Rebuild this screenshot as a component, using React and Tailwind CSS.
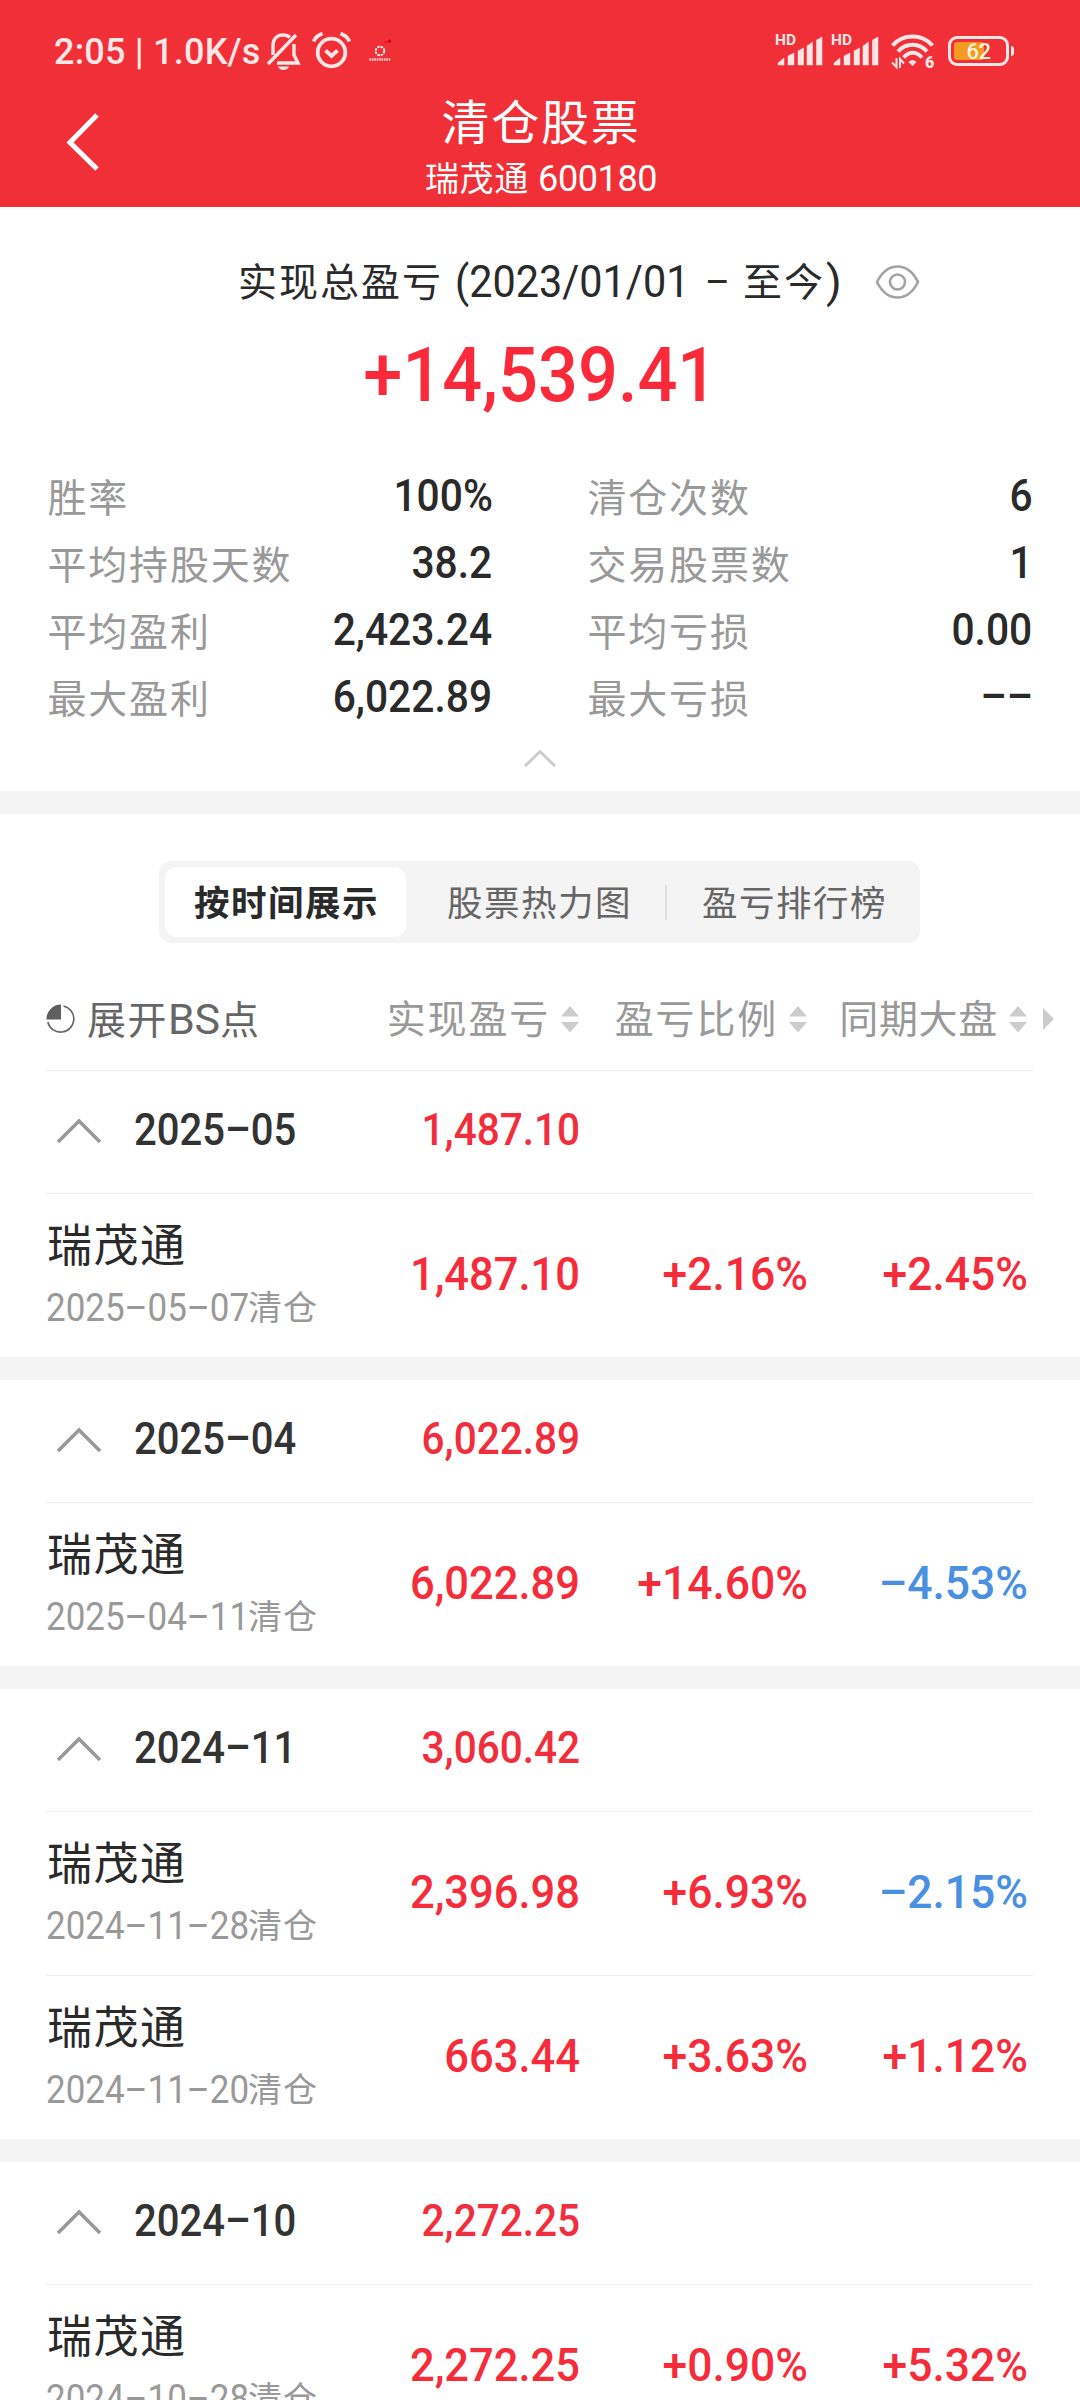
import React, { useState } from 'react';

const stats = [
  [
    { label: '胜率', value: '100%' },
    { label: '平均持股天数', value: '38.2' },
    { label: '平均盈利', value: '2,423.24' },
    { label: '最大盈利', value: '6,022.89' },
  ],
  [
    { label: '清仓次数', value: '6' },
    { label: '交易股票数', value: '1' },
    { label: '平均亏损', value: '0.00' },
    { label: '最大亏损', value: '––' },
  ],
];

const tabs = ['按时间展示', '股票热力图', '盈亏排行榜'];

const months = [
  {
    month: '2025–05',
    total: '1,487.10',
    trades: [{ name: '瑞茂通', date: '2025–05–07', profit: '1,487.10', ratio: '+2.16%', market: '+2.45%' }],
  },
  {
    month: '2025–04',
    total: '6,022.89',
    trades: [{ name: '瑞茂通', date: '2025–04–11', profit: '6,022.89', ratio: '+14.60%', market: '–4.53%' }],
  },
  {
    month: '2024–11',
    total: '3,060.42',
    trades: [
      { name: '瑞茂通', date: '2024–11–28', profit: '2,396.98', ratio: '+6.93%', market: '–2.15%' },
      { name: '瑞茂通', date: '2024–11–20', profit: '663.44', ratio: '+3.63%', market: '+1.12%' },
    ],
  },
  {
    month: '2024–10',
    total: '2,272.25',
    trades: [{ name: '瑞茂通', date: '2024–10–28', profit: '2,272.25', ratio: '+0.90%', market: '+5.32%' }],
  },
];

export default function App() {
  const [activeTab, setActiveTab] = useState(0);

  return (
    <div className="w-[1080px] h-[2400px] overflow-hidden bg-white text-[#2a2a2a] font-['Roboto','Noto_Sans_CJK_SC',sans-serif]">
      {/* Header */}
      <header className="h-[207px] bg-[#f12f37] text-white">
        <StatusBar />
        <div className="h-[105px] grid grid-cols-[200px_1fr_200px]">
          <button className="pl-[66px] pt-[9px] flex items-start">
            <svg width="34" height="60" viewBox="0 0 34 60" fill="none" stroke="#fff" strokeWidth="5">
              <path d="M31 4 L4 31.5 L31 58" />
            </svg>
          </button>
          <div className="flex flex-col items-center">
            <h1 className="h-[42px] leading-[42px] text-[48px] font-normal tracking-[1.8px] mt-[1px] mr-[-2px]">清仓股票</h1>
            <div className="h-[42px] leading-[42px] mt-[13px] text-[34px] tracking-[0.700px] mr-[-2px] whitespace-nowrap">
              瑞茂通 <span className="text-[36px] tracking-[-0.400px]">600180</span>
            </div>
          </div>
        </div>
      </header>

      {/* Summary */}
      <section className="h-[584px]">
        <div className="pt-[49px] pl-[238px] flex items-center h-[101px]">
          <span className="flex items-center h-[52px] text-[39px] leading-[52px] whitespace-nowrap">
            <span className="tracking-[2px] pt-[2px]">实现总盈亏</span>
            <span className="w-[230px] ml-[12px] text-[45px]">
              <span className="inline-block origin-left scale-x-[0.92]">(2023/01/01</span>
            </span>
            <span className="text-[38px] w-[22px] ml-[20px]">–</span>
            <span className="tracking-[2px] pt-[2px] ml-[16px]">至今</span>
            <span className="text-[45px] ml-[1px]">)</span>
          </span>
          <svg className="ml-auto mr-[160px]" width="45" height="34" viewBox="0 0 45 34" fill="none" stroke="#a3a3a3" strokeWidth="2.6">
            <path d="M2 17 C8 5 15 1.5 22.500 1.500 C30 1.500 37 5 43 17 C37 29 30 32.500 22.500 32.500 C15 32.500 8 29 2 17 Z" />
            <circle cx="22.500" cy="17" r="7.500" />
          </svg>
        </div>
        <div className="h-[132px] leading-[134px] text-center text-[76px] font-medium text-[#fb2a3a]">
          <span className="inline-block scale-x-[0.925]">+14,539.41</span>
        </div>
        <div className="grid grid-cols-[443px_443px] gap-x-[97px] pl-[48px] pt-[21px]">
          {stats.map((col, i) => (
            <div key={i}>
              {col.map((item) => (
                <div key={item.label} className="h-[67px] flex justify-between items-center">
                  <span className="text-[39px] tracking-[1.800px] text-[#999] pt-[9px] ml-[-0.500px]">{item.label}</span>
                  <span className="text-[45px] font-medium inline-block origin-right scale-x-[0.905] pt-[2px] mr-[-1.500px]">{item.value}</span>
                </div>
              ))}
            </div>
          ))}
        </div>
        <div className="flex justify-center pt-[20px]">
          <svg width="34" height="19" viewBox="0 0 34 19" fill="none" stroke="#ccc" strokeWidth="3">
            <path d="M2 17 L17 2.500 L32 17" />
          </svg>
        </div>
      </section>

      <div className="h-[23px] bg-[#f4f4f4]" />

      {/* Tabs */}
      <div className="pt-[47px] pl-[159px] flex">
        <div className="w-[761px] h-[82px] rounded-xl bg-[#f4f4f4] p-[6px] flex items-center">
          {tabs.map((tab, i) => (
            <React.Fragment key={tab}>
              {i === 2 && <span className="w-[2px] h-[35px] bg-[#dfdfdf]" />}
              <button
                onClick={() => setActiveTab(i)}
                className={`h-[70px] pt-[5px] text-[35.500px] tracking-[1.500px] rounded-xl whitespace-nowrap ${
                  i === 0 ? 'w-[241px] pl-[2px]' : i === 1 ? 'w-[259px] pl-[8px]' : 'flex-1 pl-[8px]'
                } ${activeTab === i ? 'bg-white font-bold text-[#2a2a2a]' : 'text-[#666]'}`}
              >
                {tab}
              </button>
            </React.Fragment>
          ))}
        </div>
      </div>

      {/* Table head */}
      <div className="h-[128px] pt-[24px] mx-[46px] border-b border-[#ebebeb] w-[987px]">
        <div className="h-[104px] grid grid-cols-[305px_228px_228px_220px_28px] items-center text-[39px] text-[#999] whitespace-nowrap">
          <span className="flex items-center text-[#666]">
            <svg width="30" height="30" viewBox="0 0 30 30" className="mr-[11px]">
              <path d="M15 0.500 A14.500 14.500 0 0 0 0.500 15.500 H15 Z" fill="#5f5f5f" />
              <path d="M17.500 2 A13.200 13.200 0 1 1 1.800 18" fill="none" stroke="#666" strokeWidth="1.600" />
            </svg>
            <span className="tracking-[1.500px]">展开<span className="text-[43px] tracking-[-0.200px]">BS</span>点</span>
          </span>
          <SortHead title="实现盈亏" />
          <SortHead title="盈亏比例" />
          <SortHead title="同期大盘" tight />
          <svg className="ml-[16px]" width="12" height="22" viewBox="0 0 12 22" fill="#ccc">
            <path d="M0 0 L11 11 L0 22 Z" />
          </svg>
        </div>
      </div>

      {/* Months */}
      {months.map((group, i) => (
        <section key={group.month}>
          {i > 0 && <div className="h-[23px] bg-[#f4f4f4]" />}
          <div className="h-[123px] ml-[46px] w-[987px] border-b border-[#ebebeb] grid grid-cols-[88px_218px_228px] pb-[4px] items-center text-[45px] font-medium">
            <svg className="ml-[10px] mt-[1px]" width="46" height="26" viewBox="0 0 46 26" fill="none" stroke="#999" strokeWidth="3.600">
              <path d="M2 24 L23 3 L44 24" />
            </svg>
            <span className="origin-left scale-x-[0.89] text-[#333]">{group.month}</span>
            <span className="origin-right scale-x-[0.900] text-right text-[#f22d3c]">{group.total}</span>
          </div>
          {group.trades.map((trade, j) => (
            <TradeRow key={trade.date} trade={trade} last={j === group.trades.length - 1} />
          ))}
        </section>
      ))}
    </div>
  );
}

function TradeRow({ trade, last }) {
  return (
    <div
      className={`ml-[46px] w-[987px] grid grid-cols-[305px_228px_228px_220px] text-[47px] font-medium text-[#f62c3b] ${
        last ? 'h-[163px]' : 'h-[164px] border-b border-[#ebebeb]'
      }`}
    >
      <div className="font-normal whitespace-nowrap">
        <div className="h-[56px] leading-[56px] mt-[25px] text-[45px] tracking-[1.500px] text-[#2a2a2a] pl-[1px]">{trade.name}</div>
        <div className="h-[50px] leading-[50px] mt-[8px] text-[#999] flex">
          <span className="text-[38px] w-[202px]">
            <span className="inline-block origin-left scale-x-[0.92]">{trade.date}</span>
          </span>
          <span className="text-[34px] tracking-[1px]">清仓</span>
        </div>
      </div>
      <Num value={trade.profit} />
      <Num value={trade.ratio} wide />
      <Num value={trade.market} wide />
    </div>
  );
}

function Num({ value, wide }) {
  return (
    <span
      className={`h-[160px] leading-[160px] text-right mr-[-1px] origin-right ${wide ? 'scale-x-[0.945]' : 'scale-x-[0.925]'} ${
        value.startsWith('–') ? 'text-[#4a90e2]' : ''
      }`}
    >
      {value}
    </span>
  );
}

function SortHead({ title, tight }) {
  return (
    <span className="flex items-center justify-end">
      <span className={tight ? 'pt-[3px] tracking-[0.700px]' : 'pt-[3px] tracking-[1.800px]'}>{title}</span>
      <svg className="ml-[11px]" width="18" height="27" viewBox="0 0 18 27" fill="#ccc">
        <path d="M9 0 L18 10.500 H0 Z M0 16 H18 L9 26.500 Z" />
      </svg>
    </span>
  );
}

function StatusBar() {
  return (
    <div className="h-[102px] pl-[54px] pr-[66px] flex items-center text-[#ffe6e7]">
      <span className="text-[36px] font-medium tracking-[0.200px] whitespace-nowrap w-[212px] pt-[1px]">2:05 | 1.0K/s</span>

      {/* Muted bell */}
      <svg width="36" height="40" viewBox="0 0 36 40" fill="none" stroke="currentColor" strokeWidth="3.400">
        <path d="M7 24 V15 C7 8 11 4 17 4 C20 4 22 4.500 24 6.500" />
        <path d="M28 13 V24 L32 32 H11" />
        <path d="M2 33 L30 4" />
        <path d="M12 35.500 H23 C22 38 20 39 17.500 39 C15 39 13 38 12 35.500 Z" fill="currentColor" stroke="none" />
      </svg>
      {/* Alarm */}
      <svg className="ml-[10px] mt-[-2px]" width="39" height="38" viewBox="0 0 39 38" fill="none" stroke="currentColor" strokeWidth="3.800">
        <circle cx="19.500" cy="21.500" r="13.800" />
        <path d="M13.500 19.500 L19.500 25 L25.500 19.500" />
        <path d="M1.500 10.500 C3 7 6 4 10.500 2.500 M37.500 10.500 C36 7 33 4 28.500 2.500" />
      </svg>
      {/* App notification */}
      <svg className="ml-[18px]" width="24" height="24" viewBox="0 0 24 24" fill="none">
        <circle cx="11" cy="12" r="4.300" stroke="#fff" strokeWidth="1.800" strokeDasharray="2.400 1" />
        <path d="M15 3.500 L18 1.500 V3.500 Z" fill="#e00010" />
        <circle cx="20.500" cy="2.200" r="1.800" fill="#e00010" />
        <path d="M0.500 20.500 H22" stroke="#ffd0d2" strokeWidth="2.600" strokeDasharray="1.600 0.800" />
      </svg>

      <div className="ml-auto flex items-center">
        <Signal />
        <span className="w-[8px]" />
        <Signal />
        <svg className="ml-[11px] overflow-visible" width="44" height="35" viewBox="0 0 44 35" fill="none" stroke="currentColor" strokeWidth="4">
          <path d="M1.500 11.500 C12 -0.500 31 -0.500 41.500 11.500" />
          <path d="M7 17.500 C15 8.500 28 8.500 36 17.500" />
          <path d="M12.500 23.500 C18 17 25.500 17 31 23.500" />
          <path d="M17.500 28 C19.500 25.500 23.500 25.500 25.500 28 L21.500 32 Z" fill="currentColor" stroke="none" />
          <path d="M5.500 24 V33 L1 28.500 M9 34 V25 L13 29.500" strokeWidth="2" />
          <text x="34" y="33.500" fontSize="16" fontWeight="900" fill="currentColor" stroke="none">6</text>
        </svg>
        <span className="relative ml-[13px] w-[61px] h-[30px] rounded-[9px] border-[3px] border-current p-[3px]">
          <span className="block w-[30px] h-[18px] rounded-[3px] bg-[#f79a22]" />
          <span className="absolute inset-0 text-center text-[22px] leading-[25px] font-medium tracking-[-0.500px] text-[#fff3dc]">62</span>
        </span>
        <span className="ml-[2px] w-[3px] h-[10px] rounded-r-full bg-current" />
      </div>
    </div>
  );
}

function Signal() {
  return (
    <div className="relative w-[48px] h-[32px]">
      <span className="absolute left-[-1px] top-[-4px] text-[15.500px] leading-[19px] font-bold">HD</span>
      <svg width="48" height="32" viewBox="0 0 48 32" fill="currentColor">
        <path d="M2 30 V28 L8 23 V30 Z M12 30 V21 L18 18 V30 Z M22 30 V16 L27.500 13 V30 Z M31 30 V11 L36.500 7 V30 Z M40.500 30 V5 L46 2 V30 Z" stroke="currentColor" strokeWidth="0.500" strokeLinejoin="round" />
      </svg>
    </div>
  );
}
